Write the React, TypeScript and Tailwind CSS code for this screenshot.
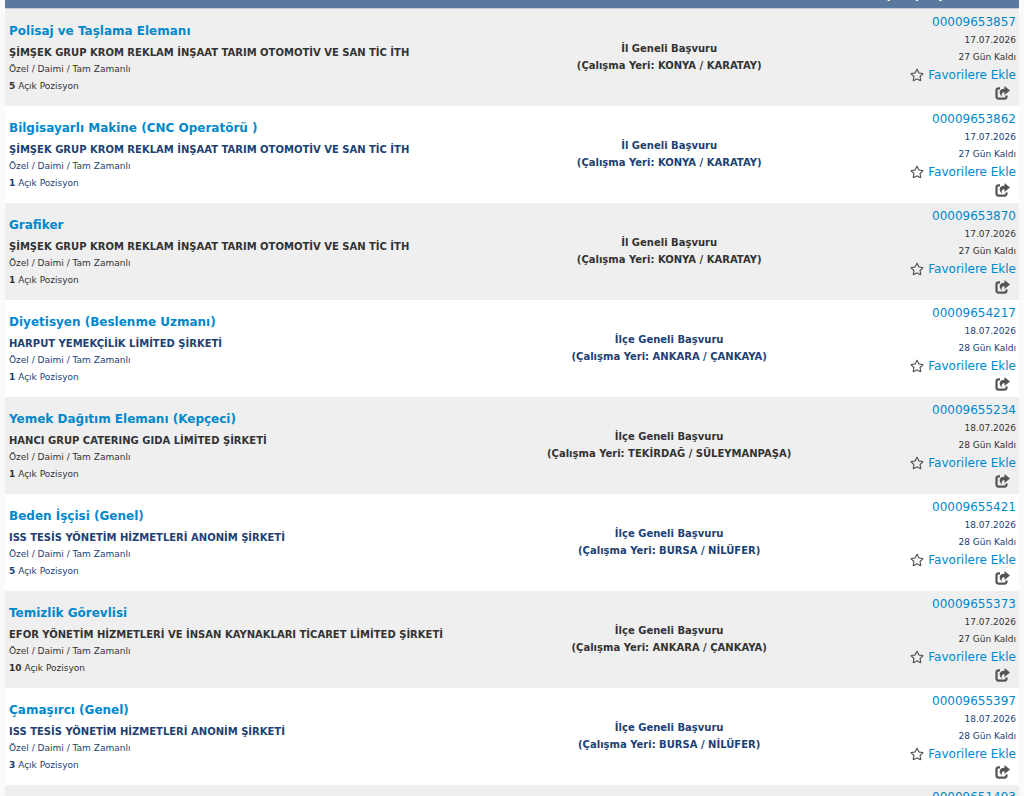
import { FaRegStar } from "react-icons/fa";

type Job = {
  no: string;
  title: string;
  company: string;
  positions: number;
  scope: string;
  place: string;
  date: string;
  daysLeft: number;
};

const jobs: Job[] = [
  { no: "00009653857", title: "Polisaj ve Taşlama Elemanı", company: "ŞİMŞEK GRUP KROM REKLAM İNŞAAT TARIM OTOMOTİV VE SAN TİC İTH", positions: 5, scope: "İl Geneli Başvuru", place: "KONYA / KARATAY", date: "17.07.2026", daysLeft: 27 },
  { no: "00009653862", title: "Bilgisayarlı Makine (CNC Operatörü )", company: "ŞİMŞEK GRUP KROM REKLAM İNŞAAT TARIM OTOMOTİV VE SAN TİC İTH", positions: 1, scope: "İl Geneli Başvuru", place: "KONYA / KARATAY", date: "17.07.2026", daysLeft: 27 },
  { no: "00009653870", title: "Grafiker", company: "ŞİMŞEK GRUP KROM REKLAM İNŞAAT TARIM OTOMOTİV VE SAN TİC İTH", positions: 1, scope: "İl Geneli Başvuru", place: "KONYA / KARATAY", date: "17.07.2026", daysLeft: 27 },
  { no: "00009654217", title: "Diyetisyen (Beslenme Uzmanı)", company: "HARPUT YEMEKÇİLİK LİMİTED ŞİRKETİ", positions: 1, scope: "İlçe Geneli Başvuru", place: "ANKARA / ÇANKAYA", date: "18.07.2026", daysLeft: 28 },
  { no: "00009655234", title: "Yemek Dağıtım Elemanı (Kepçeci)", company: "HANCI GRUP CATERING GIDA LİMİTED ŞİRKETİ", positions: 1, scope: "İlçe Geneli Başvuru", place: "TEKİRDAĞ / SÜLEYMANPAŞA", date: "18.07.2026", daysLeft: 28 },
  { no: "00009655421", title: "Beden İşçisi (Genel)", company: "ISS TESİS YÖNETİM HİZMETLERİ ANONİM ŞİRKETİ", positions: 5, scope: "İlçe Geneli Başvuru", place: "BURSA / NİLÜFER", date: "18.07.2026", daysLeft: 28 },
  { no: "00009655373", title: "Temizlik Görevlisi", company: "EFOR YÖNETİM HİZMETLERİ VE İNSAN KAYNAKLARI TİCARET LİMİTED ŞİRKETİ", positions: 10, scope: "İlçe Geneli Başvuru", place: "ANKARA / ÇANKAYA", date: "17.07.2026", daysLeft: 27 },
  { no: "00009655397", title: "Çamaşırcı (Genel)", company: "ISS TESİS YÖNETİM HİZMETLERİ ANONİM ŞİRKETİ", positions: 3, scope: "İlçe Geneli Başvuru", place: "BURSA / NİLÜFER", date: "18.07.2026", daysLeft: 28 },
];

// Last entry is cut off by the bottom of the list, only its number peeks in
const nextJobNo = "00009651493";

function ShareIcon() {
  return (
    <svg viewBox="0 0 30 28" className="block h-[14px] w-[15px]" aria-hidden="true">
      <path
        d="M10 4.500H7a4 4 0 0 0-4 4V21a4 4 0 0 0 4 4h12a4 4 0 0 0 4-4v-2"
        fill="none"
        stroke="currentColor"
        strokeWidth="4.500"
      />
      <path d="M19 0l11 9-11 9v-5.500c-5 0-7 3-4.500 9C7 16 7 5.500 19 5.500z" fill="currentColor" />
    </svg>
  );
}

function JobRow({ job }: { job: Job }) {
  return (
    <tr className="h-[97px] bg-white text-[#203f73] odd:bg-[#efefef] odd:text-[#333]">
      <td className="px-1 pb-0.5 align-middle">
        <a href="#" className="block pb-px text-[12px] leading-6 font-bold text-[#0088cc]">
          {job.title}
        </a>
        <div className="text-[10px] font-bold">{job.company}</div>
        <div>Özel / Daimi / Tam Zamanlı</div>
        <div>
          <b>{job.positions}</b> Açık Pozisyon
        </div>
      </td>
      <td className="pb-0.5 text-center align-middle text-[10px] font-bold">
        <div>{job.scope}</div>
        <div>(Çalışma Yeri: {job.place})</div>
      </td>
      <td className="pr-[3px] pl-1 text-right align-middle">
        <a href="#" className="block pb-px text-[12px] leading-[18px] text-[#0088cc]">
          {job.no}
        </a>
        <div>{job.date}</div>
        <div>{job.daysLeft} Gün Kaldı</div>
        <button type="button" className="ml-auto flex items-center gap-1 text-[12px] leading-[18px] text-[#0088cc]">
          <FaRegStar className="text-[14px] text-[#555]" />
          Favorilere Ekle
        </button>
        <button type="button" aria-label="Paylaş" className="mr-1.5 ml-auto flex h-[18px] items-center text-[#555]">
          <ShareIcon />
        </button>
      </td>
    </tr>
  );
}

export default function App() {
  return (
    <main className="h-screen overflow-hidden bg-[#fafafa] px-[5px]">
      <table className="w-full table-fixed border-collapse font-['DejaVu_Sans',sans-serif] text-[9px] leading-[17px]">
        <colgroup>
          <col className="w-[46%]" />
          <col className="w-[39%]" />
          <col className="w-[15%]" />
        </colgroup>
        <thead>
          <tr className="bg-[#5b789e] text-white">
            <th colSpan={3} className="p-0">
              {/* Header is scrolled almost out of view */}
              <div className="flex h-2 items-end justify-end overflow-hidden pr-6">
                <span className="pb-1.5 text-[11px] leading-3">Son Kapanış Yayın Tarihi</span>
              </div>
            </th>
          </tr>
          <tr className="h-px bg-[#c3ced9]">
            <th colSpan={3} className="p-0"></th>
          </tr>
        </thead>
        <tbody>
          {jobs.map((job) => (
            <JobRow key={job.no} job={job} />
          ))}
          <tr className="h-[97px] bg-[#efefef]">
            <td></td>
            <td></td>
            <td className="pt-[3px] pr-[3px] pl-1 text-right align-top">
              <a href="#" className="block text-[12px] leading-[18px] text-[#0088cc]">
                {nextJobNo}
              </a>
            </td>
          </tr>
        </tbody>
      </table>
    </main>
  );
}
